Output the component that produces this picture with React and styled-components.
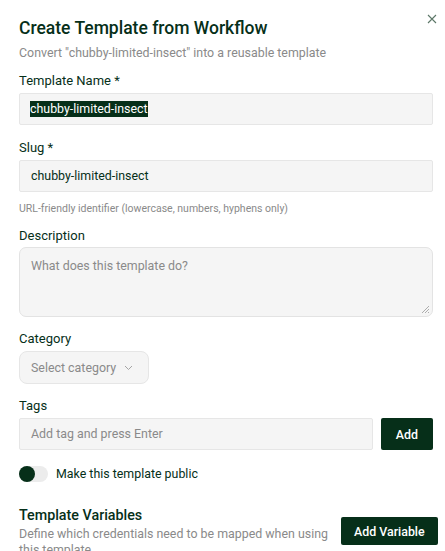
import React from 'react'
import styled, { createGlobalStyle } from 'styled-components'

const GREEN = '#062f19'

const Global = createGlobalStyle`
  html, body { margin: 0; padding: 0; background: #fff; }
  body { font-family: Roboto, "Noto Sans", sans-serif; color: ${GREEN}; overflow: hidden; }
  * { box-sizing: border-box; }
`

const Dialog = styled.div`
  position: relative;
  width: 445px;
  height: 551px;
  padding: 17px 12px 0 19px;
  overflow: hidden;
`

const Close = styled.button`
  position: absolute;
  top: 12px;
  right: 6px;
  width: 14px;
  height: 14px;
  padding: 0;
  border: none;
  background: none;
  color: #5d7768;
  display: flex;
  align-items: center;
  justify-content: center;
`

const Title = styled.h2`
  margin: 0;
  font-size: 17.5px;
  font-weight: 500;
  line-height: 22px;
`

const Subtitle = styled.p`
  margin: 6px 0 0;
  font-size: 12.4px;
  line-height: 16px;
  color: #8a8a8a;
`

const Field = styled.div`
  display: flex;
  flex-direction: column;
  margin-top: ${p => p.$top || 14}px;
`

const Label = styled.label`
  font-size: 13px;
  line-height: 16px;
  margin-bottom: ${p => p.$gap || 4}px;
`

const Input = styled.div`
  height: 32px;
  display: flex;
  align-items: center;
  padding: 0 11px;
  background: #f5f5f5;
  border: 1px solid #e6e6e6;
  border-radius: 2px;
  font-size: 12.4px;
  line-height: 16px;
  white-space: nowrap;
  color: ${p => (p.$placeholder ? '#8a8a8a' : GREEN)};
  flex: ${p => (p.$grow ? 1 : 'none')};
`

const Selected = styled.span`
  background: ${GREEN};
  color: #fff;
  margin-left: -1px;
`

const Help = styled.div`
  margin-top: 10px;
  font-size: 10.5px;
  line-height: 13px;
  color: #8a8a8a;
`

const Textarea = styled.div`
  position: relative;
  height: 70px;
  padding: 10px 11px;
  background: #f5f5f5;
  border: 1px solid #e3e3e3;
  border-radius: 7px;
  font-size: 12.4px;
  line-height: 16px;
  color: #8a8a8a;
`

const Grip = styled.svg`
  position: absolute;
  right: 2px;
  bottom: 2px;
`

const Select = styled.div`
  width: 130px;
  height: 33px;
  display: flex;
  align-items: center;
  gap: 8px;
  padding: 0 11px;
  background: #f5f5f5;
  border: 1px solid #e6e6e6;
  border-radius: 8px;
  font-size: 12.4px;
  line-height: 16px;
  white-space: nowrap;
  color: #8a8a8a;
`

const Row = styled.div`
  display: flex;
  gap: 8px;
`

const Button = styled.button`
  height: ${p => p.$h || 32}px;
  padding: 0 ${p => p.$px || 14}px;
  border: none;
  border-radius: 2px;
  background: ${GREEN};
  color: #fff;
  font-family: inherit;
  font-size: 12.4px;
  font-weight: 500;
  white-space: nowrap;
  flex: none;
`

const ToggleRow = styled.div`
  display: flex;
  align-items: center;
  gap: 8px;
  margin-top: 16px;
  font-size: 12.4px;
  line-height: 16px;
`

const Track = styled.div`
  width: 29px;
  height: 16px;
  border-radius: 8px;
  background: #ececec;
  position: relative;
`

const Knob = styled.div`
  position: absolute;
  left: 0;
  top: 0;
  width: 16px;
  height: 16px;
  border-radius: 50%;
  background: ${GREEN};
`

const Section = styled.div`
  display: flex;
  justify-content: space-between;
  align-items: flex-start;
  gap: 8px;
  margin-top: 24px;
`

const SectionText = styled.div`
  display: flex;
  flex-direction: column;
`

const SectionTitle = styled.div`
  font-size: 14.3px;
  font-weight: 500;
  line-height: 18px;
`

const SectionDesc = styled.div`
  margin-top: 2px;
  font-size: 12.4px;
  line-height: 16px;
  color: #8a8a8a;
  width: 314px;
`

const VarButton = styled(Button)`
  margin-top: 11px;
`

const App = () => {
  return (
    <>
      <Global />
      <Dialog>
        <Close aria-label='Close'>
          <svg width='10' height='10' viewBox='0 0 10 10'>
            <path d='M1 1L9 9M9 1L1 9' stroke='currentColor' strokeWidth='1.1' />
          </svg>
        </Close>
        <Title>Create Template from Workflow</Title>
        <Subtitle>Convert "chubby-limited-insect" into a reusable template</Subtitle>

        <Field $top={12}>
          <Label>Template Name *</Label>
          <Input><Selected>chubby-limited-insect</Selected></Input>
        </Field>

        <Field $top={15}>
          <Label>Slug *</Label>
          <Input>chubby-limited-insect</Input>
          <Help>URL-friendly identifier (lowercase, numbers, hyphens only)</Help>
        </Field>

        <Field $top={13}>
          <Label $gap={3}>Description</Label>
          <Textarea>
            What does this template do?
            <Grip width='9' height='9' viewBox='0 0 9 9'>
              <path d='M8 1L1 8M8 4L4 8M8 7L7 8' stroke='#9a9a9a' strokeWidth='0.8' />
            </Grip>
          </Textarea>
        </Field>

        <Field $top={14}>
          <Label>Category</Label>
          <Select>
            Select category
            <svg width='9' height='6' viewBox='0 0 9 6'>
              <path d='M1 1L4.5 4.5L8 1' stroke='#a5a5a5' strokeWidth='1' fill='none' />
            </svg>
          </Select>
        </Field>

        <Field $top={14}>
          <Label>Tags</Label>
          <Row>
            <Input $grow $placeholder>Add tag and press Enter</Input>
            <Button $px={15}>Add</Button>
          </Row>
        </Field>

        <ToggleRow>
          <Track><Knob /></Track>
          Make this template public
        </ToggleRow>

        <Section>
          <SectionText>
            <SectionTitle>Template Variables</SectionTitle>
            <SectionDesc>Define which credentials need to be mapped when using this template</SectionDesc>
          </SectionText>
          <VarButton $h={28} $px={13}>Add Variable</VarButton>
        </Section>
      </Dialog>
    </>
  )
}

export default App
